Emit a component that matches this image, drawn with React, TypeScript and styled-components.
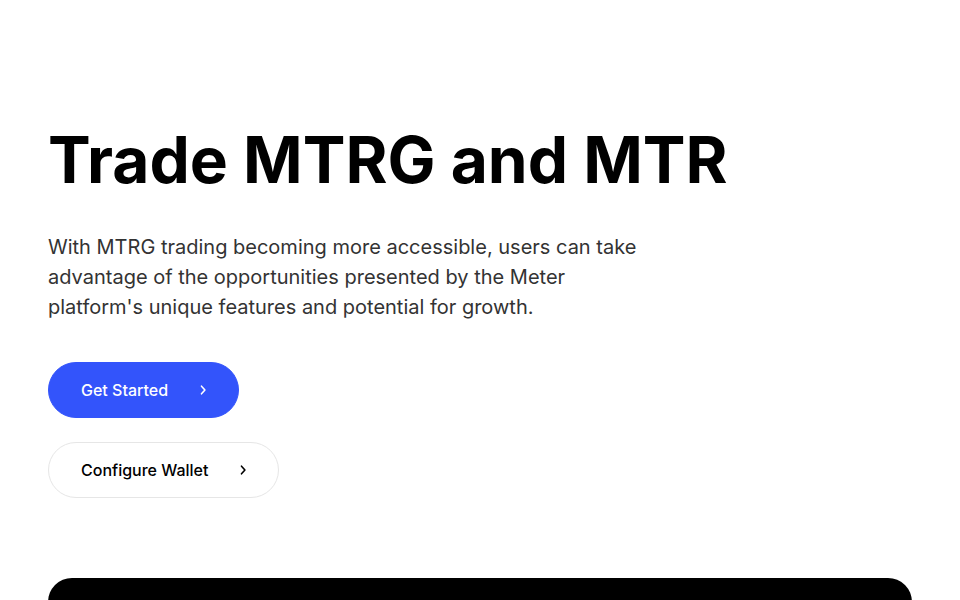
import React from 'react';
import styled, { createGlobalStyle } from 'styled-components';

const GlobalStyle = createGlobalStyle`
  body {
    margin: 0;
    background: #fff;
    font-family: Inter, "Noto Sans", sans-serif;
    color: #000;
  }
`;

const Page = styled.main`
  padding: 118px 48px 0;
`;

const Hero = styled.section`
  display: flex;
  flex-direction: column;
  align-items: flex-start;
`;

const Title = styled.h1`
  margin: 0;
  font-size: 64px;
  font-weight: 700;
  line-height: 84px;
`;

const Lead = styled.p`
  margin: 30px 0 0;
  max-width: 600px;
  font-size: 20px;
  line-height: 30px;
  color: #333;
`;

const Actions = styled.div`
  display: flex;
  flex-direction: column;
  align-items: flex-start;
  gap: 24px;
  margin-top: 40px;
`;

const Button = styled.a<{ $primary?: boolean }>`
  display: flex;
  align-items: center;
  gap: 29px;
  height: 56px;
  box-sizing: border-box;
  padding: 0 29px 0 32px;
  border-radius: 28px;
  font-size: 16px;
  font-weight: 500;
  text-decoration: none;
  cursor: pointer;
  background: ${({ $primary }) => ($primary ? '#3354fb' : '#fff')};
  color: ${({ $primary }) => ($primary ? '#fff' : '#000')};
  border: 1px solid ${({ $primary }) => ($primary ? '#3354fb' : '#e6e6e6')};
`;

const Chevron = () => (
  <svg width="12" height="12" viewBox="0 0 12 12" fill="none">
    <path d="M4.5 2.2l3.4 3.8-3.4 3.8" stroke="currentColor" strokeWidth="1.6" strokeLinecap="round" strokeLinejoin="round" />
  </svg>
);

const DarkPanel = styled.section`
  margin-top: 80px;
  height: 200px;
  background: #000;
  border-radius: 24px;
`;

export default function App() {
  return (
    <>
      <GlobalStyle />
      <Page>
        <Hero>
          <Title>Trade MTRG and MTR</Title>
          <Lead>
            With MTRG trading becoming more accessible, users can take advantage of the opportunities presented by the
            Meter platform's unique features and potential for growth.
          </Lead>
          <Actions>
            <Button $primary>
              Get Started
              <Chevron />
            </Button>
            <Button>
              Configure Wallet
              <Chevron />
            </Button>
          </Actions>
        </Hero>
        <DarkPanel />
      </Page>
    </>
  );
}
